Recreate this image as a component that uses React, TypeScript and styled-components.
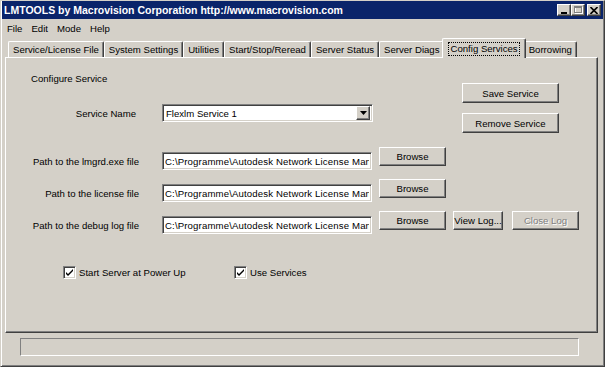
import {FC} from "react";
import styled, {createGlobalStyle, css} from "styled-components";

const colors = {
  face: "#d4d0c8",
  light: "#ffffff",
  shadow: "#808080",
  dark: "#404040",
  title: "#0a246a",
  text: "#000000",
  disabled: "#808080",
};

const raised = css`
  border: 1px solid;
  border-color: ${colors.light} ${colors.dark} ${colors.dark} ${colors.light};
  box-shadow: inset -1px -1px ${colors.shadow}, inset 1px 1px ${colors.face};
`
const sunken = css`
  border: 1px solid;
  border-color: ${colors.shadow} ${colors.light} ${colors.light} ${colors.shadow};
  box-shadow: inset 1px 1px ${colors.dark}, inset -1px -1px ${colors.face};
`

const GlobalStyle = createGlobalStyle`
  html, body {
    margin: 0;
    padding: 0;
    background: ${colors.face};
  }
  body {
    font-family: "Liberation Sans", Arial, sans-serif;
    font-size: 9.6px;
    color: ${colors.text};
  }
`

const tabs = [
  "Service/License File",
  "System Settings",
  "Utilities",
  "Start/Stop/Reread",
  "Server Status",
  "Server Diags",
  "Config Services",
  "Borrowing",
]

const paths = [
  {label: "Path to the lmgrd.exe file", log: false},
  {label: "Path to the license file", log: false},
  {label: "Path to the debug log file", log: true},
]

const licensePath = "C:\\Programme\\Autodesk Network License Manager\\lmgrd.exe"

const Check:FC = () => (
  <CheckBox>
    <svg width="9" height="9" viewBox="0 0 9 9">
      <path d="M1 4 L3 6 L8 1 L8 3 L3 8 L1 6 Z" fill="#000"/>
    </svg>
  </CheckBox>
)

const App:FC = () => {
  return(
    <>
      <GlobalStyle/>
      <Window>
        <TitleBar>
          <TitleText>LMTOOLS by Macrovision Corporation http://www.macrovision.com</TitleText>
          <TitleButtons>
            <TitleButton>
              <svg width="8" height="8" viewBox="0 0 8 8"><rect x="1" y="6" width="6" height="2" fill="#000"/></svg>
            </TitleButton>
            <TitleButton>
              <svg width="9" height="9" viewBox="0 0 9 9">
                <rect x="1.5" y="1.5" width="7" height="6" fill="none" stroke={colors.light} strokeWidth="1"/>
                <rect x="0.5" y="0.5" width="7" height="6" fill="none" stroke={colors.shadow} strokeWidth="1"/>
                <rect x="0" y="0" width="8" height="2" fill={colors.shadow}/>
              </svg>
            </TitleButton>
            <TitleButton $gap={2}>
              <svg width="8" height="7" viewBox="0 0 8 7">
                <path d="M0.5 0 L7.5 7 M7.5 0 L0.5 7" stroke="#000" strokeWidth="1.6"/>
              </svg>
            </TitleButton>
          </TitleButtons>
        </TitleBar>

        <MenuBar>
          <MenuItem>File</MenuItem>
          <MenuItem>Edit</MenuItem>
          <MenuItem>Mode</MenuItem>
          <MenuItem>Help</MenuItem>
        </MenuBar>

        <TabStrip>
          {tabs.map(tab => (
            <Tab key={tab} $active={tab === "Config Services"}>
              {tab === "Config Services" ? <Focus>{tab}</Focus> : tab}
            </Tab>
          ))}
        </TabStrip>

        <Panel>
          <TopSection>
            <LeftCol>
              <Heading>Configure Service</Heading>
              <FieldRow>
                <Label $inset={3}>Service Name</Label>
                <Combo>
                  <ComboText>Flexlm Service 1</ComboText>
                  <ComboButton>
                    <svg width="7" height="4" viewBox="0 0 7 4"><path d="M0 0 H7 L3.5 4 Z" fill="#000"/></svg>
                  </ComboButton>
                </Combo>
              </FieldRow>
            </LeftCol>
            <ButtonCol>
              <Button $width={97} $height={20}>Save Service</Button>
              <Button $width={97} $height={20}>Remove Service</Button>
            </ButtonCol>
          </TopSection>

          <PathList>
            {paths.map(p => (
              <PathRow key={p.label}>
                <FieldRow $drop={5}>
                  <Label>{p.label}</Label>
                  <TextInput readOnly value={licensePath}/>
                </FieldRow>
                <Button $width={67} $height={19} $left={7}>Browse</Button>
                {p.log && <>
                  <Button $width={50} $height={19} $left={7}>View Log...</Button>
                  <Button $width={67} $height={19} $left={9} disabled>Close Log</Button>
                </>}
              </PathRow>
            ))}
          </PathList>

          <CheckRow>
            <CheckItem>
              <Check/>
              <CheckLabel>Start Server at Power Up</CheckLabel>
            </CheckItem>
            <CheckItem>
              <Check/>
              <CheckLabel>Use Services</CheckLabel>
            </CheckItem>
          </CheckRow>
        </Panel>

        <StatusArea>
          <StatusBar/>
        </StatusArea>
      </Window>
    </>
  )
}

const Window = styled.div`
  width: 605px;
  height: 367px;
  box-sizing: border-box;
  display: flex;
  flex-direction: column;
  padding: 0 1px 1px 1px;
  background: ${colors.face};
  border: 1px solid;
  border-color: ${colors.face} ${colors.dark} ${colors.dark} ${colors.face};
  box-shadow: inset 1px 0 ${colors.light}, inset -1px -1px ${colors.shadow};
`
const TitleBar = styled.div`
  height: 18px;
  display: flex;
  align-items: center;
  padding: 0 2px 0 2px;
  background: ${colors.title};
`
const TitleText = styled.div`
  font-weight: 700;
  font-size: 10.5px;
  color: ${colors.light};
  white-space: nowrap;
`
const TitleButtons = styled.div`
  margin-left: auto;
  display: flex;
`
const TitleButton = styled.div<{$gap?: number}>`
  width: 14px;
  height: 12px;
  margin-left: ${props => props.$gap || 0}px;
  box-sizing: border-box;
  display: flex;
  align-items: center;
  justify-content: center;
  background: ${colors.face};
  ${raised};
`
const MenuBar = styled.div`
  height: 19px;
  display: flex;
  align-items: center;
  gap: 9px;
  padding-left: 5px;
`
const MenuItem = styled.span`
  line-height: 12px;
`
const TabStrip = styled.div`
  height: 19px;
  display: flex;
  align-items: flex-end;
  padding-left: 6px;
  position: relative;
  z-index: 1;
`
const Tab = styled.div<{$active?: boolean}>`
  height: ${props => props.$active ? 20 : 16}px;
  margin: ${props => props.$active ? "0 -2px -1px" : "0"};
  padding: 0 ${props => props.$active ? 6 : 4}px;
  box-sizing: border-box;
  display: flex;
  align-items: center;
  white-space: nowrap;
  position: relative;
  z-index: ${props => props.$active ? 2 : 1};
  background: ${colors.face};
  border-top: 1px solid ${colors.light};
  border-left: 1px solid ${colors.light};
  border-right: 1px solid ${colors.dark};
  border-radius: 2px 2px 0 0;
  box-shadow: inset -1px 0 ${colors.shadow};
`
const Focus = styled.span`
  padding: 0 1px;
  line-height: 12px;
  outline: 1px dotted ${colors.text};
  outline-offset: 0;
`
const Panel = styled.div`
  height: 276px;
  margin: 0 5px 0 3px;
  box-sizing: border-box;
  display: flex;
  flex-direction: column;
  border: 1px solid;
  border-color: ${colors.light} ${colors.dark} ${colors.dark} ${colors.light};
  box-shadow: inset -1px -1px ${colors.shadow};
`
const TopSection = styled.div`
  display: flex;
  align-items: flex-start;
`
const LeftCol = styled.div`
  display: flex;
  flex-direction: column;
`
const Heading = styled.div`
  margin: 15px 0 0 25px;
  line-height: 12px;
`
const FieldRow = styled.div<{$drop?: number}>`
  margin-top: ${props => props.$drop ?? 19}px;
  display: flex;
  align-items: center;
`
const Label = styled.div<{$inset?: number}>`
  width: 133px;
  padding: 2px ${props => props.$inset || 0}px 0 0;
  box-sizing: border-box;
  text-align: right;
  line-height: 12px;
  white-space: nowrap;
`
const Combo = styled.div`
  width: 211px;
  height: 18px;
  margin-left: 23px;
  box-sizing: border-box;
  display: flex;
  align-items: center;
  padding: 0 2px;
  background: ${colors.light};
  ${sunken};
`
const ComboText = styled.span`
  flex: 1;
  padding-left: 1px;
`
const ComboButton = styled.div`
  width: 14px;
  height: 14px;
  box-sizing: border-box;
  display: flex;
  align-items: center;
  justify-content: center;
  background: ${colors.face};
  ${raised};
`
const ButtonCol = styled.div`
  margin: 25px 0 0 89px;
  display: flex;
  flex-direction: column;
  gap: 10px;
`
const Button = styled.button<{$width: number, $height: number, $left?: number}>`
  width: ${props => props.$width}px;
  height: ${props => props.$height}px;
  margin-left: ${props => props.$left || 0}px;
  padding: 0;
  box-sizing: border-box;
  font: inherit;
  color: ${colors.text};
  background: ${colors.face};
  ${raised};

  &:disabled{
    color: ${colors.disabled};
    text-shadow: 1px 1px ${colors.light};
  }
`
const PathList = styled.div`
  margin-top: 14px;
  display: flex;
  flex-direction: column;
  gap: 9px;
`
const PathRow = styled.div`
  display: flex;
  align-items: flex-start;

  & > ${FieldRow}{
    margin-top: 5px;
  }
`
const TextInput = styled.input`
  width: 210px;
  height: 18px;
  margin: 0 0 0 23px;
  padding: 0 2px;
  box-sizing: border-box;
  font: inherit;
  letter-spacing: 0.15px;
  color: ${colors.text};
  background: ${colors.light};
  ${sunken};

  &:focus{
    outline: none;
  }
`
const CheckRow = styled.div`
  margin: 32px 0 0 57px;
  display: grid;
  grid-template-columns: 171px auto;
`
const CheckItem = styled.div`
  display: flex;
  align-items: center;
`
const CheckBox = styled.div`
  width: 13px;
  height: 13px;
  box-sizing: border-box;
  display: flex;
  align-items: center;
  justify-content: center;
  background: ${colors.light};
  ${sunken};
`
const CheckLabel = styled.span`
  margin-left: 3px;
  line-height: 12px;
`
const StatusArea = styled.div`
  flex: 1;
  padding: 5px 24px 0 18px;
`
const StatusBar = styled.div`
  height: 18px;
  box-sizing: border-box;
  border: 1px solid;
  border-color: ${colors.shadow} ${colors.light} ${colors.light} ${colors.shadow};
`

export default App
